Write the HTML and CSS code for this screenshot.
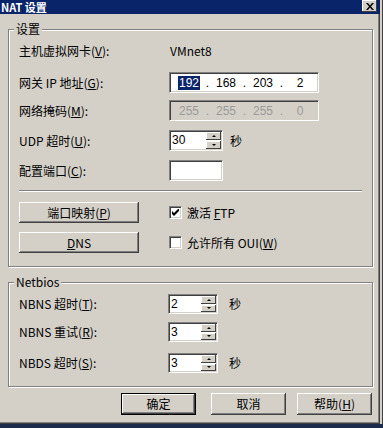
FILE: index.html
```html
<!DOCTYPE html>
<html lang="zh-CN">
<head>
    <meta charset="UTF-8">
    <meta name="viewport" content="width=device-width, initial-scale=1.0">
    <title>NAT 设置</title>
    <link rel="stylesheet" href="styles.css">
</head>
<body>
<div class="screen">
    <div class="window">
        <div class="titlebar">
            <span class="title">NAT 设置</span>
            <span class="close">
                <svg width="8" height="7" viewBox="0 0 8 7"><path d="M0 0h2l2 2.5L6 0h2L5 3.5 8 7H6L4 4.5 2 7H0l3-3.5z" fill="#000"/></svg>
            </span>
        </div>

        <div class="content">
            <fieldset class="group">
                <legend>设置</legend>
                <div class="group-body main-body">
                    <div class="row row-host">
                        <span class="label">主机虚拟网卡(<u>V</u>):</span>
                        <span class="value">VMnet8</span>
                    </div>
                    <div class="row row-gateway">
                        <span class="label">网关 IP 地址(<u>G</u>):</span>
                        <div class="ipbox">
                            <span class="octet"><span class="selected">192</span></span><span class="dot">.</span>
                            <span class="octet">168</span><span class="dot">.</span>
                            <span class="octet">203</span><span class="dot">.</span>
                            <span class="octet">2</span>
                        </div>
                    </div>
                    <div class="row row-mask">
                        <span class="label">网络掩码(<u>M</u>):</span>
                        <div class="ipbox disabled">
                            <span class="octet">255</span><span class="dot">.</span>
                            <span class="octet">255</span><span class="dot">.</span>
                            <span class="octet">255</span><span class="dot">.</span>
                            <span class="octet">0</span>
                        </div>
                    </div>
                    <div class="row row-udp">
                        <span class="label">UDP 超时(<u>U</u>):</span>
                        <div class="spin spin-wide">
                            <span class="spin-value">30</span>
                            <span class="spin-btns">
                                <span class="spin-btn"><i class="arrow-up"></i></span>
                                <span class="spin-btn"><i class="arrow-down"></i></span>
                            </span>
                        </div>
                        <span class="unit">秒</span>
                    </div>
                    <div class="row row-port">
                        <span class="label">配置端口(<u>C</u>):</span>
                        <div class="textbox"></div>
                    </div>
                    <div class="separator"></div>
                    <div class="row row-btn1">
                        <span class="label"><button class="btn">端口映射(<u>P</u>)</button></span>
                        <span class="check checked">
                            <svg width="7" height="7" viewBox="0 0 7 7"><path d="M0 2v3l2 2 5-5V-1L2 4z" fill="#000"/></svg>
                        </span>
                        <span class="check-label">激活 <u>F</u>TP</span>
                    </div>
                    <div class="row row-btn2">
                        <span class="label"><button class="btn"><u>D</u>NS</button></span>
                        <span class="check"></span>
                        <span class="check-label">允许所有 OUI(<u>W</u>)</span>
                    </div>
                </div>
            </fieldset>

            <fieldset class="group group-netbios">
                <legend>Netbios</legend>
                <div class="group-body netbios-body">
                    <div class="row row-nb1">
                        <span class="label nb-label">NBNS 超时(<u>T</u>):</span>
                        <div class="spin">
                            <span class="spin-value">2</span>
                            <span class="spin-btns">
                                <span class="spin-btn"><i class="arrow-up"></i></span>
                                <span class="spin-btn"><i class="arrow-down"></i></span>
                            </span>
                        </div>
                        <span class="unit">秒</span>
                    </div>
                    <div class="row row-nb2">
                        <span class="label nb-label">NBNS 重试(<u>R</u>):</span>
                        <div class="spin">
                            <span class="spin-value">3</span>
                            <span class="spin-btns">
                                <span class="spin-btn"><i class="arrow-up"></i></span>
                                <span class="spin-btn"><i class="arrow-down"></i></span>
                            </span>
                        </div>
                    </div>
                    <div class="row row-nb3">
                        <span class="label nb-label">NBDS 超时(<u>S</u>):</span>
                        <div class="spin">
                            <span class="spin-value">3</span>
                            <span class="spin-btns">
                                <span class="spin-btn"><i class="arrow-up"></i></span>
                                <span class="spin-btn"><i class="arrow-down"></i></span>
                            </span>
                        </div>
                        <span class="unit">秒</span>
                    </div>
                </div>
            </fieldset>

            <div class="actions">
                <button class="btn btn-action btn-default">确定</button>
                <button class="btn btn-action btn-cancel">取消</button>
                <button class="btn btn-action btn-help">帮助(<u>H</u>)</button>
            </div>
        </div>
    </div>
    <div class="edge"></div>
</div>
</body>
</html>
```

FILE: styles.css
```css
* {
    box-sizing: border-box;
}

body {
    margin: 0;
    width: 383px;
    height: 428px;
    overflow: hidden;
    background: #1c2b4c;
    font: 12px "Noto Sans CJK SC", sans-serif;
    line-height: 14px;
    color: #000;
}

u {
    text-decoration-thickness: 1px;
    text-underline-offset: 1px;
}

.screen {
    display: flex;
}

.window {
    width: 380px;
    height: 424px;
    background: #d4d0c8;
    box-shadow: inset -1px -1px #404040, inset -2px -2px #808080;
}

.edge {
    width: 3px;
    height: 424px;
    background: #d4d0c8;
    box-shadow: inset -1px 0 #404040;
}

/* title bar */
.titlebar {
    height: 14px;
    background: #0a246a;
    display: flex;
    align-items: center;
    justify-content: space-between;
}

.title {
    color: #fff;
    font-size: 11px;
    font-weight: bold;
    padding-left: 1px;
    line-height: 14px;
}

.close {
    width: 15px;
    height: 12px;
    margin-right: 3px;
    align-self: flex-start;
    background: #d4d0c8;
    box-shadow: inset -1px -1px #404040, inset 1px 1px #fff;
    display: flex;
    align-items: center;
    justify-content: center;
}

/* groups */
.content {
    padding: 8px 0 0 8px;
}

.group {
    width: 365px;
    margin: 0;
    padding: 0;
    min-inline-size: 0;
    border: 1px solid #808080;
    box-shadow: 1px 1px 0 #fff, inset 1px 1px 0 #fff;
}

.group legend {
    margin-left: 5px;
    padding: 0 2px;
    line-height: 14px;
    background: #d4d0c8;
}

.group-netbios {
    margin-top: 8px;
}

.group-body {
    padding: 4px 10px 13px 10px;
}

.netbios-body {
    padding-top: 5px;
}

.row {
    display: flex;
    align-items: center;
    height: 21px;
}

.label {
    width: 150px;
    flex-shrink: 0;
}

.nb-label {
    width: 149px;
}

.value {
    padding-left: 1px;
}

.row-gateway { margin-top: 11px; }
.row-mask { margin-top: 7px; }
.row-udp { margin-top: 9px; }
.row-port { margin-top: 9px; }
.row-btn1 { margin-top: 10px; }
.row-btn2 { margin-top: 9px; }

.row-nb1, .row-nb2, .row-nb3 { height: 20px; }
.row-nb2 { margin-top: 8px; }
.row-nb3 { margin-top: 11px; }

.separator {
    margin-top: 9px;
    height: 2px;
    border-top: 1px solid #808080;
    border-bottom: 1px solid #fff;
}

/* sunken fields */
.ipbox,
.textbox,
.spin,
.check {
    background: #fff;
    border: 1px solid;
    border-color: #808080 #fff #fff #808080;
    box-shadow: inset 1px 1px #404040, inset -1px -1px #d4d0c8;
}

.ipbox {
    width: 150px;
    height: 21px;
    display: flex;
    align-items: center;
    padding-left: 5px;
    font-family: "Liberation Sans", sans-serif;
}

.ipbox.disabled {
    background: #d4d0c8;
    color: #9a9a9a;
}

.octet {
    width: 28px;
    text-align: center;
}

.dot {
    width: 9px;
    text-align: center;
}

.selected {
    background: #0a246a;
    color: #fff;
    padding: 0 1px;
}

.textbox {
    width: 54px;
    height: 21px;
}

.spin {
    width: 50px;
    height: 20px;
    display: flex;
    padding: 1px 1px 1px 2px;
}

.spin-wide {
    width: 54px;
    height: 21px;
}

.spin-value {
    flex: 1;
    font-family: "Liberation Sans", sans-serif;
    line-height: 17px;
}

.spin-btns {
    width: 15px;
    display: flex;
    flex-direction: column;
    gap: 1px;
}

.spin-btn {
    flex: 1;
    background: #d4d0c8;
    box-shadow: inset -1px -1px #404040, inset 1px 1px #fff;
    display: flex;
    align-items: center;
    justify-content: center;
}

.arrow-up,
.arrow-down {
    width: 0;
    height: 0;
    border-left: 2px solid transparent;
    border-right: 2px solid transparent;
}

.arrow-up {
    border-bottom: 2px solid #000;
}

.arrow-down {
    border-top: 2px solid #000;
}

.unit {
    margin-left: 7px;
}

.row-nb1 .unit,
.row-nb3 .unit {
    margin-left: 11px;
}

/* checkboxes */
.check {
    width: 13px;
    height: 13px;
    display: flex;
    align-items: center;
    justify-content: center;
}

.check-label {
    margin-left: 5px;
}

/* buttons */
.btn {
    width: 120px;
    height: 21px;
    padding: 0;
    border: 0;
    background: #d4d0c8;
    font: inherit;
    line-height: 14px;
    color: #000;
    box-shadow: inset -1px -1px #404040, inset 1px 1px #fff, inset -2px -2px #808080;
}

.actions {
    display: flex;
    margin-top: 6px;
    padding-left: 113px;
}

.btn-action {
    width: 75px;
    height: 22px;
}

.btn-default {
    box-shadow: inset 0 0 0 1px #000, inset -2px -2px #404040, inset 2px 2px #fff, inset -3px -3px #808080;
}

.btn-cancel {
    margin-left: 15px;
}

.btn-help {
    margin-left: 11px;
}
```
